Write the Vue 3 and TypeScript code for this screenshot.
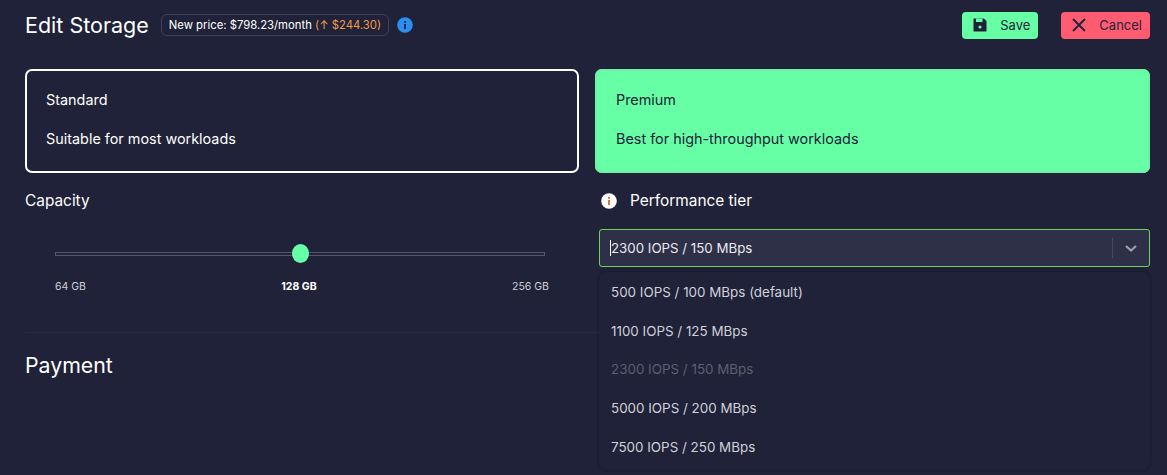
<script setup lang="ts">
const options: string[] = [
  '500 IOPS / 100 MBps (default)',
  '1100 IOPS / 125 MBps',
  '2300 IOPS / 150 MBps',
  '5000 IOPS / 200 MBps',
  '7500 IOPS / 250 MBps',
]
</script>

<template>
  <div class="page">
    <header class="head">
      <h1>Edit Storage</h1>
      <span class="price">New price: $798.23/month <em>(↑ $244.30)</em></span>
      <svg class="info" width="16" height="16" viewBox="0 0 16 16"><circle cx="8" cy="8" r="7.8" fill="#2b8ff0"/><rect x="7.1" y="7" width="1.8" height="5" fill="#1e2139"/><rect x="7.1" y="4" width="1.8" height="1.8" fill="#1e2139"/></svg>
      <div class="actions">
        <button class="btn save">
          <svg width="14" height="14" viewBox="0 0 14 14"><path d="M0.5 0.5h10.5L13.5 3V13.5H0.5z" fill="#1e2139"/><rect x="3" y="0.5" width="6.5" height="3.5" fill="#66ffa6"/><circle cx="7" cy="9" r="1.6" fill="#66ffa6"/></svg>
          <span>Save</span>
        </button>
        <button class="btn cancel">
          <svg width="14" height="14" viewBox="0 0 14 14"><path d="M1 1l12 12M13 1L1 13" stroke="#1e2139" stroke-width="1.8"/></svg>
          <span>Cancel</span>
        </button>
      </div>
    </header>
    <section class="tiers">
      <div class="tier sel"><div>Standard</div><div>Suitable for most workloads</div></div>
      <div class="tier prem"><div>Premium</div><div>Best for high-throughput workloads</div></div>
    </section>
    <section class="cols">
      <div class="cap">
        <div class="lab">Capacity</div>
        <div class="slider"><span class="thumb"></span></div>
        <div class="marks"><span>64 GB</span><b>128 GB</b><span>256 GB</span></div>
      </div>
      <div class="perf">
        <div class="lab row">
          <svg width="16" height="16" viewBox="0 0 16 16"><circle cx="8" cy="8" r="7.8" fill="#fff"/><rect x="7.1" y="7" width="1.8" height="5" fill="#e0622c"/><rect x="7.1" y="4" width="1.8" height="1.8" fill="#e0622c"/></svg>
          Performance tier
        </div>
        <div class="select">
          <i class="caret"></i>
          <span>2300 IOPS / 150 MBps</span>
          <i class="sep"></i>
          <svg width="20" height="20" viewBox="0 0 20 20"><path d="M5 8l5 4.5 5-4.5" fill="none" stroke="#98a0b2" stroke-width="2.2"/></svg>
        </div>
        <ul class="menu">
          <li v-for="o in options" :key="o" :class="{ dim: o.startsWith('2300') }">{{ o }}</li>
        </ul>
      </div>
    </section>
    <hr />
    <h2>Payment</h2>
  </div>
</template>

<style>
body { background: #1f2238; }
</style>

<style scoped>
.page { width: 1167px; height: 475px; overflow: hidden; background: #1f2238; color: #fff; font-family: Inter, sans-serif; padding: 0 17px 0 25px; box-sizing: border-box; }
.head { display: flex; align-items: center; height: 50px; }
h1 { font-size: 21.5px; font-weight: 400; margin: 0 12px 0 0; }
.price { border: 1px solid #3d4058; border-radius: 6px; font-size: 11.3px; line-height: 20px; padding: 0 7px; margin-right: 8px; white-space: nowrap; }
.price em { font-style: normal; color: #f0994a; }
.actions { margin-left: auto; display: flex; gap: 23px; }
.btn { display: flex; align-items: center; height: 27px; border: 0; border-radius: 4px; font: 13px Inter, sans-serif; color: #1f2238; padding: 0 8px 0 11px; }
.btn span { margin-left: 13px; }
.save { background: #66ffa6; }
.cancel { background: #ff5c72; }
.tiers { display: grid; grid-template-columns: 554px 555px; gap: 16px; margin-top: 19px; }
.tier { height: 104px; box-sizing: border-box; border-radius: 7px; padding: 19px 19px; font-size: 14.4px; line-height: 20px; display: flex; flex-direction: column; gap: 19px; }
.sel { border: 2px solid #fff; }
.prem { background: #66ffa6; color: #1f2238; padding: 21px; box-shadow: inset 0 0 0 2px #72f0a8; }
.cols { display: grid; grid-template-columns: 554px 551px; gap: 20px; margin-top: 17px; }
.lab { font-size: 15.4px; line-height: 22px; height: 22px; }
.row { display: flex; gap: 13px; align-items: center; margin-left: 2px; }
.slider { height: 4px; width: 490px; box-sizing: border-box; margin: 40px 0 0 30px; border: 1px solid #55586c; position: relative; }
.thumb { position: absolute; left: 236px; top: -9px; width: 17px; height: 19px; border-radius: 50%; background: #66ffa6; }
.marks { display: flex; justify-content: space-between; width: 494px; margin: 24px 0 0 30px; font-size: 10.5px; color: #cfd1d9; }
.marks b { color: #fff; }
.select { margin-top: 17px; height: 38px; box-sizing: border-box; border: 1px solid #6fd35a; border-radius: 3px; background: #2e3047; display: flex; align-items: center; padding: 0 8px 0 10px; font-size: 13.3px; color: #e8e9ee; position: relative; }
.select span { flex: 1; }
.caret { width: 1px; height: 16px; background: #fff; }
.sep { width: 1px; height: 20px; background: #464960; margin-right: 8px; }
.menu { list-style: none; position: absolute; left: 0; right: 0; margin: 5px 0 0; padding: 1px 0 4px; background: #1f2238; border-radius: 8px; box-shadow: 0 0 3px rgba(0,0,0,.3); font-size: 13.4px; color: #d0d1d8; }
.menu li { height: 38.7px; line-height: 38.7px; padding-left: 12px; }
.menu .dim { color: #5d5f72; }
.perf { position: relative; }
hr { border: 0; border-top: 1px solid #282b42; margin: 39px 0 0; }
h2 { font-size: 21.3px; font-weight: 400; line-height: 30px; margin: 17px 0 0; }
</style>
